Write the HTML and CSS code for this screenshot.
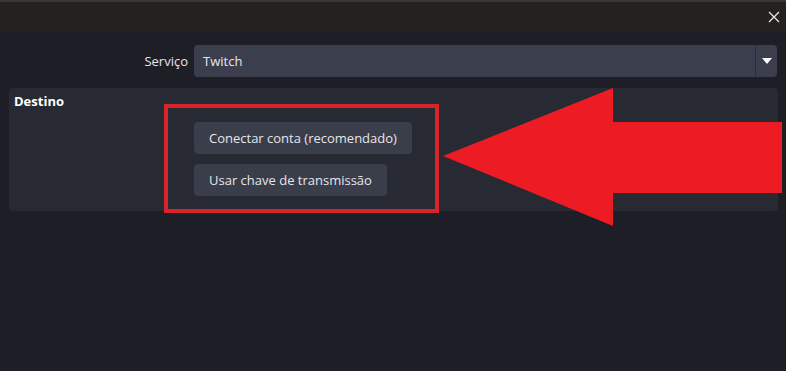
FILE: index.html
```html
<!DOCTYPE html>
<html lang="pt-BR">
<head>
    <meta charset="UTF-8">
    <title>Configurações - Transmissão</title>
    <link rel="stylesheet" href="styles.css">
</head>
<body>
    <div class="titlebar">
        <span class="close">
            <svg width="12" height="12" viewBox="0 0 12 12"><path d="M1 1L11 11M11 1L1 11" stroke="#e8e8e8" stroke-width="1.3"/></svg>
        </span>
    </div>

    <div class="form-row">
        <label class="form-label">Serviço</label>
        <div class="select">
            <span class="select-value">Twitch</span>
            <span class="select-btn">
                <svg width="10" height="6" viewBox="0 0 10 6"><path d="M0 0H10L5 6Z" fill="#fff"/></svg>
            </span>
        </div>
    </div>

    <div class="group">
        <div class="group-title">Destino</div>
        <div class="group-body">
            <button class="btn">Conectar conta (recomendado)</button>
            <button class="btn">Usar chave de transmissão</button>
        </div>
        <!-- annotation -->
        <div class="mark-box"></div>
    </div>

    <svg class="mark-arrow" width="340" height="140" viewBox="0 0 340 140">
        <path d="M0 68L170 0V34H339V105H170V138Z" fill="#ed1c24"/>
    </svg>
</body>
</html>
```

FILE: styles.css
```css
* { box-sizing: border-box; }

body {
  margin: 0;
  height: 100vh;
  overflow: hidden;
  position: relative;
  background: #1e1f26;
  color: #e6e6ea;
  font: 13px/1.4 "Open Sans", "Noto Sans", sans-serif;
}

.titlebar {
  height: 32px;
  background: #252120;
  border-top: 2px solid #3a3735;
  display: flex;
  justify-content: flex-end;
  align-items: center;
  padding-right: 6px;
}

.close {
  display: flex;
  width: 12px;
  height: 12px;
}

.form-row {
  display: flex;
  align-items: center;
  gap: 6px;
  padding: 13px 9px 0 0;
}

.form-label {
  width: 188px;
  text-align: right;
}

.select {
  flex: 1;
  height: 32px;
  display: flex;
  align-items: center;
  background: #3b3e4c;
  border-radius: 4px;
}

.select-value {
  flex: 1;
  padding-left: 9px;
}

.select-btn {
  width: 22px;
  height: 100%;
  display: flex;
  align-items: center;
  justify-content: center;
  border-left: 1px solid #2a2c36;
}

.group {
  position: relative;
  margin: 11px 8px 0 9px;
  height: 123px;
  background: #272a33;
  border-radius: 4px;
  padding: 4px 5px;
}

.group-title {
  font-weight: 700;
  color: #fff;
}

.group-body {
  display: flex;
  flex-direction: column;
  align-items: flex-start;
  gap: 10px;
  padding: 12px 0 0 180px;
}

.btn {
  height: 32px;
  padding: 0 15px;
  border: 0;
  border-radius: 4px;
  background: #3a3d4a;
  color: #e6e6ea;
  font: inherit;
}

.mark-box {
  position: absolute;
  left: 155px;
  top: 16px;
  width: 275px;
  height: 109px;
  border: 4px solid #d9232b;
}

.mark-arrow {
  position: absolute;
  left: 443px;
  top: 88px;
}
```
